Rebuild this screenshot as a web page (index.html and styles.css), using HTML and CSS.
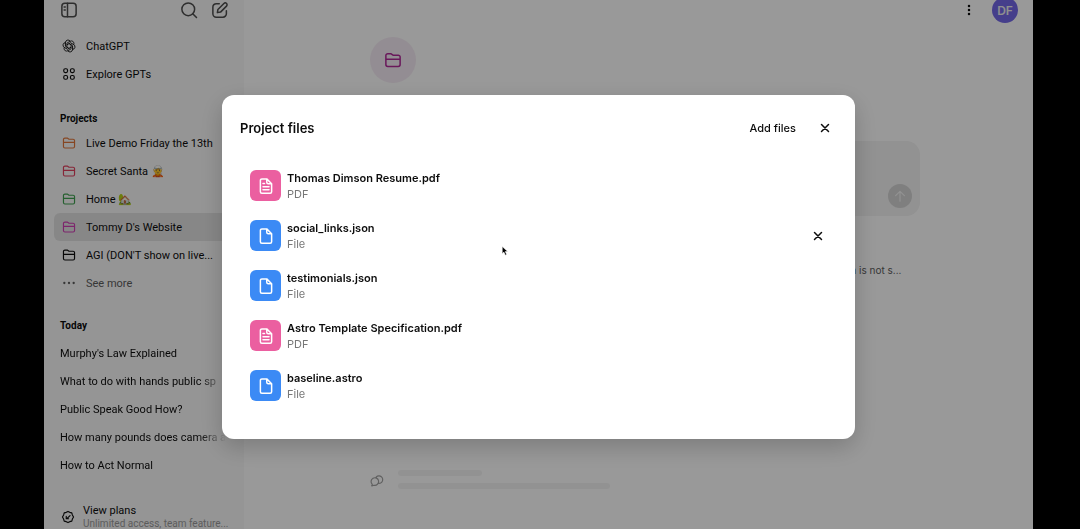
FILE: index.html
```
<!DOCTYPE html>
<html lang="en">

<head>
    <meta charset="UTF-8">
    <meta name="viewport" content="width=device-width, initial-scale=1.0">
    <title>ChatGPT</title>
    <link rel="stylesheet" href="styles.css">
</head>

<body>
    <!-- shared icons -->
    <svg class="sprite" aria-hidden="true">
        <symbol id="folder" viewBox="0 0 24 24">
            <path d="M2.500 18V6a2.500 2.500 0 0 1 2.500-2.500h4l3 2h7A2.500 2.500 0 0 1 21.500 8v10a2.500 2.500 0 0 1-2.500 2.500H5A2.500 2.500 0 0 1 2.500 18zM2.500 11h19" />
        </symbol>
        <symbol id="close" viewBox="0 0 24 24">
            <path d="M5 5l14 14M19 5L5 19" />
        </symbol>
        <symbol id="file" viewBox="0 0 24 24">
            <path d="M13 2.500H6.500a2 2 0 0 0-2 2v15a2 2 0 0 0 2 2h11a2 2 0 0 0 2-2V9zM13 2.500V7a2 2 0 0 0 2 2h4.500" />
        </symbol>
        <symbol id="pdf" viewBox="0 0 24 24">
            <path d="M13 2.500H6.500a2 2 0 0 0-2 2v15a2 2 0 0 0 2 2h11a2 2 0 0 0 2-2V9zM13 2.500V7a2 2 0 0 0 2 2h4.500M8 8.500h2M8 13h8M8 17h8" />
        </symbol>
    </svg>

    <div class="app">
        <aside class="sidebar">
            <div class="tools">
                <button class="icon-btn" aria-label="Close sidebar">
                    <svg class="icon tool" viewBox="0 0 24 24"><rect x="2.500" y="3" width="19" height="18" rx="4" /><path d="M10 3v18M5.500 8h1.500M5.500 12h1.500" /></svg>
                </button>
                <button class="icon-btn search" aria-label="Search chats">
                    <svg class="icon tool" viewBox="0 0 24 24"><circle cx="11" cy="11" r="8.500" /><path d="M17 17l5 5" /></svg>
                </button>
                <button class="icon-btn" aria-label="New chat">
                    <svg class="icon tool" viewBox="0 0 24 24"><path d="M11 3.500H7A4.500 4.500 0 0 0 2.500 8v9A4.500 4.500 0 0 0 7 21.500h9a4.500 4.500 0 0 0 4.500-4.500v-4M8.500 15.500l.7-4.200 8-8a2.400 2.400 0 0 1 3.500 3.500l-8 8z" /></svg>
                </button>
            </div>

            <nav class="nav">
                <a class="row" href="#">
                    <svg class="icon knot" viewBox="0 0 24 24">
                        <path id="petal" d="M8.500 14V7l5.500-3.200a4.500 4.500 0 0 1 6.300 5.700" />
                        <use href="#petal" transform="rotate(60 12 12)" />
                        <use href="#petal" transform="rotate(120 12 12)" />
                        <use href="#petal" transform="rotate(180 12 12)" />
                        <use href="#petal" transform="rotate(240 12 12)" />
                        <use href="#petal" transform="rotate(300 12 12)" />
                    </svg>
                    <span>ChatGPT</span>
                </a>
                <a class="row" href="#">
                    <svg class="icon" viewBox="0 0 24 24"><rect x="3" y="3" width="6.500" height="6.500" rx="2.500" /><rect x="14.500" y="3" width="6.500" height="6.500" rx="2.500" /><rect x="3" y="14.500" width="6.500" height="6.500" rx="2.500" /><rect x="14.500" y="14.500" width="6.500" height="6.500" rx="2.500" /></svg>
                    <span>Explore GPTs</span>
                </a>
            </nav>

            <section class="group">
                <h2>Projects</h2>
                <a class="row" href="#"><svg class="icon orange"><use href="#folder" /></svg><span>Live Demo Friday the 13th</span></a>
                <a class="row" href="#"><svg class="icon red"><use href="#folder" /></svg><span>Secret Santa 🧝</span></a>
                <a class="row" href="#"><svg class="icon green"><use href="#folder" /></svg><span>Home 🏡</span></a>
                <a class="row active" href="#"><svg class="icon pink"><use href="#folder" /></svg><span>Tommy D's Website</span></a>
                <a class="row" href="#"><svg class="icon"><use href="#folder" /></svg><span>AGI (DON'T show on live...</span></a>
                <a class="row more" href="#">
                    <svg class="icon dots" viewBox="0 0 24 24"><circle cx="4" cy="12" r="2" /><circle cx="12" cy="12" r="2" /><circle cx="20" cy="12" r="2" /></svg>
                    <span>See more</span>
                </a>
            </section>

            <section class="group history">
                <h2>Today</h2>
                <a class="row" href="#"><span>Murphy's Law Explained</span></a>
                <a class="row" href="#"><span>What to do with hands public sp</span></a>
                <a class="row" href="#"><span>Public Speak Good How?</span></a>
                <a class="row" href="#"><span>How many pounds does camera a</span></a>
                <a class="row" href="#"><span>How to Act Normal</span></a>
            </section>

            <a class="plans" href="#">
                <svg class="icon" viewBox="0 0 24 24"><path d="M12 2.500l3 1.500 3.500 1 1 3.500L21.500 12l-2 3.500-1 3.500-3.500 1-3 1.500L9 20l-3.500-1-1-3.500L2.500 12l2-3.500 1-3.500L9 4zM15.500 9.500l-5 5M9 11v4h4" /></svg>
                <span class="plans-text">
                    <span>View plans</span>
                    <small>Unlimited access, team feature...</small>
                </span>
            </a>
        </aside>

        <main class="main">
            <header class="topbar">
                <button class="icon-btn" aria-label="More options">
                    <svg class="icon dots" viewBox="0 0 24 24"><circle cx="12" cy="4" r="2.500" /><circle cx="12" cy="12" r="2.500" /><circle cx="12" cy="20" r="2.500" /></svg>
                </button>
                <button class="avatar">DF</button>
            </header>
            <div class="content">
                <div class="badge"><svg class="icon"><use href="#folder" /></svg></div>
                <form class="composer">
                    <textarea aria-label="Message"></textarea>
                    <button class="send" type="button" aria-label="Send">
                        <svg class="icon" viewBox="0 0 24 24"><path d="M12 21V4M4.500 11.500L12 4l7.500 7.500" /></svg>
                    </button>
                </form>
                <p class="note">which is not s...</p>
                <div class="loading">
                    <svg class="icon" viewBox="0 0 24 24"><path d="M4 19.500a6.500 6.500 0 1 1 3 1.500l-4 1zM10.500 7a6.500 6.500 0 1 1 7 10.500l-2.500.3" /></svg>
                    <div class="bars">
                        <i class="bar short"></i>
                        <i class="bar"></i>
                    </div>
                </div>
            </div>
        </main>
    </div>

    <div class="overlay">
        <div class="modal" role="dialog" aria-labelledby="modal-title">
            <header class="modal-header">
                <h1 id="modal-title">Project files</h1>
                <button class="add">Add files</button>
                <button class="icon-btn close" aria-label="Close"><svg class="icon"><use href="#close" /></svg></button>
            </header>
            <ul class="files">
                <li class="file">
                    <span class="thumb pdf"><svg class="icon"><use href="#pdf" /></svg></span>
                    <div class="info"><b>Thomas Dimson Resume.pdf</b><span>PDF</span></div>
                </li>
                <li class="file">
                    <span class="thumb"><svg class="icon"><use href="#file" /></svg></span>
                    <div class="info"><b>social_links.json</b><span>File</span></div>
                    <button class="icon-btn close" aria-label="Remove file"><svg class="icon"><use href="#close" /></svg></button>
                </li>
                <li class="file">
                    <span class="thumb"><svg class="icon"><use href="#file" /></svg></span>
                    <div class="info"><b>testimonials.json</b><span>File</span></div>
                </li>
                <li class="file">
                    <span class="thumb pdf"><svg class="icon"><use href="#pdf" /></svg></span>
                    <div class="info"><b>Astro Template Specification.pdf</b><span>PDF</span></div>
                </li>
                <li class="file">
                    <span class="thumb"><svg class="icon"><use href="#file" /></svg></span>
                    <div class="info"><b>baseline.astro</b><span>File</span></div>
                </li>
            </ul>
            <svg class="cursor" viewBox="0 0 12 18"><path d="M1 1v13l3-3 2.500 5.500 2.500-1L6.500 10H11z" /></svg>
        </div>
    </div>
</body>

</html>
```

FILE: styles.css
```
* {
    margin: 0;
    padding: 0;
    box-sizing: border-box;
}

body {
    height: 100vh;
    overflow: hidden;
    background-color: #000;
    color: #0d0d0d;
    font-family: Inter, "Liberation Sans", sans-serif;
    font-size: 11px;
}

a {
    color: inherit;
    text-decoration: none;
}

button,
textarea {
    border: none;
    background: none;
    color: inherit;
    font: inherit;
}

.sprite {
    display: none;
}

.icon {
    width: 14px;
    height: 14px;
    flex: none;
    fill: none;
    stroke: currentColor;
    stroke-width: 2;
    stroke-linecap: round;
    stroke-linejoin: round;
}

.dots {
    fill: currentColor;
    stroke: none;
}

.icon-btn {
    display: flex;
    cursor: pointer;
}

.app {
    display: flex;
    height: 100vh;
    margin: 0 47px 0 44px;
    overflow: hidden;
    background-color: #fff;
}

/* sidebar */
.sidebar {
    width: 200px;
    flex: none;
    padding: 0 10px;
    background-color: #f8f8f8;
    font-family: Roboto, "Liberation Sans", sans-serif;
}

.tools {
    display: flex;
    align-items: center;
    gap: 13px;
    height: 20px;
    padding: 0 5px 0 6px;
    color: #4d4d4d;
}

.tool {
    width: 18px;
    height: 18px;
}

.tools .search {
    margin-left: auto;
}

.nav {
    margin-top: 12px;
}

.knot {
    stroke-width: 1.4;
}

.row {
    display: flex;
    align-items: center;
    gap: 10px;
    height: 28px;
    padding-left: 8px;
    border-radius: 6px;
    white-space: nowrap;
}

.row.active {
    background-color: #e2e2e2;
}

.row.more {
    color: #5d5d5d;
}

.group {
    margin-top: 21px;
}

.group h2 {
    padding-left: 6px;
    font-size: 10px;
    font-weight: 700;
    line-height: 20px;
}

.history {
    margin-top: 19px;
}

.history h2 {
    padding-bottom: 3px;
}

.history .row {
    padding-left: 6px;
    -webkit-mask-image: linear-gradient(to right, #000 145px, transparent 172px);
    mask-image: linear-gradient(to right, #000 145px, transparent 172px);
}

.orange {
    color: #e0763a;
}

.red {
    color: #e0405e;
}

.green {
    color: #3fa04f;
}

.pink {
    color: #d03fb4;
}

.plans {
    display: flex;
    align-items: center;
    gap: 8px;
    margin-top: 25px;
    padding-left: 7px;
    white-space: nowrap;
}

.plans-text {
    display: flex;
    flex-direction: column;
    line-height: 13px;
}

.plans small {
    color: #9a9a9a;
    font-size: 10px;
}

/* main */
.main {
    flex: 1;
    padding-left: 12px;
}

.topbar {
    display: flex;
    justify-content: flex-end;
    align-items: center;
    gap: 16px;
    height: 20px;
    padding-right: 15px;
}

.topbar .dots {
    width: 14px;
    height: 12px;
}

.avatar {
    width: 26px;
    height: 26px;
    flex: none;
    border-radius: 50%;
    background-color: #7468e8;
    color: #eee;
    font-size: 12px;
    font-weight: 600;
}

.content {
    max-width: 550px;
    margin: 17px auto 0;
}

.badge {
    display: flex;
    align-items: center;
    justify-content: center;
    width: 46px;
    height: 46px;
    border-radius: 50%;
    background-color: #f6ecf5;
    color: #b02898;
}

.badge .icon {
    width: 18px;
    height: 18px;
}

.composer {
    display: flex;
    align-items: flex-end;
    margin-top: 58px;
    padding: 8px;
    border-radius: 14px;
    background-color: #f3f3f3;
}

.composer textarea {
    flex: 1;
    height: 59px;
    resize: none;
}

.send {
    display: flex;
    align-items: center;
    justify-content: center;
    width: 24px;
    height: 24px;
    border-radius: 50%;
    background-color: #d4d4d4;
    color: #f3f3f3;
}

.note {
    margin-top: 46px;
    padding-right: 18px;
    color: #5d5d5d;
    font-size: 10px;
    line-height: 16px;
    text-align: right;
}

.loading {
    display: flex;
    align-items: center;
    gap: 14px;
    margin-top: 192px;
    color: #a0a0a0;
}

.bars {
    display: flex;
    flex-direction: column;
    gap: 7px;
    width: 212px;
}

.bar {
    height: 6px;
    border-radius: 3px;
    background-color: #f4f4f4;
}

.bar.short {
    width: 40%;
}

/* dialog */
.overlay {
    position: fixed;
    top: 0;
    right: 47px;
    bottom: 0;
    left: 44px;
    display: flex;
    align-items: center;
    justify-content: center;
    padding-top: 4px;
    background-color: rgba(0, 0, 0, 0.4);
}

.modal {
    position: relative;
    width: 64%;
    padding: 18px 22px 28px 18px;
    border-radius: 12px;
    background-color: #fff;
    box-shadow: 0 8px 24px rgba(0, 0, 0, 0.2);
}

.modal-header {
    display: flex;
    align-items: center;
    gap: 21px;
    height: 30px;
}

.modal-header h1 {
    flex: 1;
    font-size: 13px;
    font-weight: 600;
}

.add {
    font-weight: 500;
    cursor: pointer;
}

.close .icon {
    width: 16px;
    height: 12px;
    stroke-width: 3;
}

.files {
    margin-top: 18px;
    padding: 0 7px 0 10px;
    list-style: none;
}

.file {
    display: flex;
    align-items: center;
    gap: 6px;
    height: 50px;
}

.thumb {
    display: flex;
    align-items: center;
    justify-content: center;
    width: 31px;
    height: 31px;
    border-radius: 6px;
    background-color: #3b8af5;
    color: #fff;
}

.thumb.pdf {
    background-color: #eb5fa0;
}

.thumb .icon {
    width: 18px;
    height: 18px;
}

.info {
    display: flex;
    flex: 1;
    flex-direction: column;
    line-height: 16px;
}

.info b {
    font-weight: 600;
}

.info span {
    color: #777;
}

.cursor {
    position: absolute;
    top: 44%;
    left: 44%;
    width: 8px;
    height: 10px;
    stroke: #fff;
}
```
